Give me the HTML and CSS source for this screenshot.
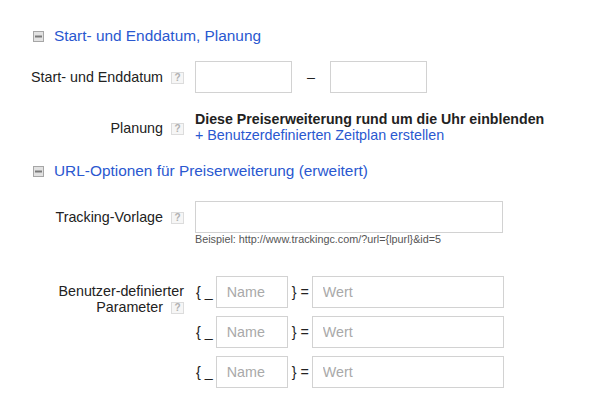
FILE: index.html
```html
<!DOCTYPE html>
<html lang="de">
<head>
<meta charset="utf-8">
<title>Preiserweiterung</title>
<link rel="stylesheet" href="styles.css">
</head>
<body>
<div class="page">
  <div class="section-head">
    <svg class="toggle" width="11" height="11" viewBox="0 0 11 11"><rect x="0.5" y="0.5" width="10" height="10" fill="#e2e2e2" stroke="#a6a6a6"/><rect x="2" y="4.5" width="7" height="2" fill="#7a7a7a"/></svg>
    <span class="section-title">Start- und Enddatum, Planung</span>
  </div>

  <div class="row row-dates">
    <div class="label">Start- und Enddatum<span class="help">?</span></div>
    <div class="control dates">
      <input class="field date" type="text">
      <span class="dash">–</span>
      <input class="field date" type="text">
    </div>
  </div>

  <div class="row row-plan">
    <div class="label label-plan">Planung<span class="help">?</span></div>
    <div class="control plan">
      <div class="plan-text">Diese Preiserweiterung rund um die Uhr einblenden</div>
      <a class="link" href="#">+ Benutzerdefinierten Zeitplan erstellen</a>
    </div>
  </div>

  <div class="section-head section-url">
    <svg class="toggle" width="11" height="11" viewBox="0 0 11 11"><rect x="0.5" y="0.5" width="10" height="10" fill="#e2e2e2" stroke="#a6a6a6"/><rect x="2" y="4.5" width="7" height="2" fill="#7a7a7a"/></svg>
    <span class="section-title">URL-Optionen für Preiserweiterung (erweitert)</span>
  </div>

  <div class="row row-tracking">
    <div class="label">Tracking-Vorlage<span class="help">?</span></div>
    <div class="control tracking">
      <input class="field wide" type="text">
      <div class="hint">Beispiel: http://www.trackingc.com/?url={lpurl}&amp;id=5</div>
    </div>
  </div>

  <div class="row row-params">
    <div class="label label-multi">Benutzer-definierter<br>Parameter<span class="help">?</span></div>
    <div class="control params">
      <div class="param">
        <span class="brace">{ _</span>
        <input class="field name" type="text" placeholder="Name">
        <span class="brace close">} =</span>
        <input class="field value" type="text" placeholder="Wert">
      </div>
      <div class="param">
        <span class="brace">{ _</span>
        <input class="field name" type="text" placeholder="Name">
        <span class="brace close">} =</span>
        <input class="field value" type="text" placeholder="Wert">
      </div>
      <div class="param">
        <span class="brace">{ _</span>
        <input class="field name" type="text" placeholder="Name">
        <span class="brace close">} =</span>
        <input class="field value" type="text" placeholder="Wert">
      </div>
    </div>
  </div>
</div>
</body>
</html>
```

FILE: styles.css
```css
* { box-sizing: border-box; }

html, body {
  margin: 0;
  padding: 0;
  background: #ffffff;
}

body {
  font-family: "Liberation Sans", Arial, sans-serif;
  font-size: 14.3px;
  color: #222222;
}

.page {
  padding-top: 26px;
}

.section-head {
  display: flex;
  align-items: center;
  gap: 10px;
  height: 20px;
  padding-left: 33px;
}

.toggle {
  display: block;
  flex: none;
}

.section-title {
  font-size: 15.4px;
  line-height: 20px;
  color: #2a58d0;
}

.row {
  display: flex;
  align-items: flex-start;
}

.label {
  width: 184px;
  height: 32px;
  flex: none;
  text-align: right;
  line-height: 32px;
  color: #222222;
}

.label-plan {
  line-height: 34px;
}

.help {
  display: inline-block;
  width: 13px;
  height: 12px;
  margin-left: 8px;
  border: 1px solid #dcdcdc;
  background: #f6f6f6;
  color: #b0b0b0;
  font-size: 10px;
  font-weight: bold;
  line-height: 10px;
  text-align: center;
  vertical-align: middle;
}

.control {
  margin-left: 11px;
}

.field {
  display: block;
  height: 32px;
  margin: 0;
  padding: 0 10px;
  border: 1px solid #d2d2d2;
  border-radius: 0;
  background: #ffffff;
  font-family: "Liberation Sans", Arial, sans-serif;
  font-size: 14.3px;
  color: #222222;
  outline: none;
}

.field::placeholder {
  color: #a9a9a9;
}

.row-dates {
  margin-top: 15px;
}

.dates {
  display: flex;
  align-items: center;
  gap: 15px;
}

.date {
  width: 97px;
}

.dash {
  line-height: 32px;
  color: #222222;
}

.row-plan {
  margin-top: 18px;
}

.plan {
  height: 32px;
  line-height: 16px;
}

.plan-text {
  font-size: 14.2px;
  font-weight: bold;
  color: #222222;
}

.link {
  color: #2a58d0;
  text-decoration: none;
}

.section-url {
  margin-top: 18px;
}

.row-tracking {
  margin-top: 20px;
}

.wide {
  width: 308px;
}

.hint {
  font-size: 10.8px;
  line-height: 12px;
  color: #555555;
}

.row-params {
  margin-top: 31px;
}

.label-multi {
  height: auto;
  line-height: 16px;
  padding-top: 7px;
}

.params {
  display: flex;
  flex-direction: column;
  gap: 8px;
  margin-left: 12px;
}

.param {
  display: flex;
  align-items: center;
}

.brace {
  line-height: 32px;
  color: #222222;
  margin-right: 3px;
}

.brace.close {
  margin-left: 4px;
}

.name {
  width: 72px;
}

.value {
  width: 192px;
}
```
